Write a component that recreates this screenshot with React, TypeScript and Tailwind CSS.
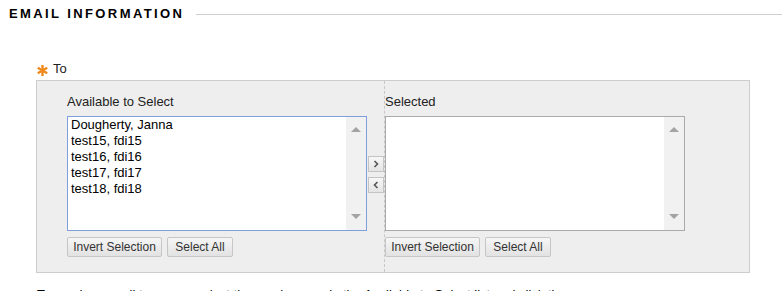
import React from "react";

const available = [
  "Dougherty, Janna",
  "test15, fdi15",
  "test16, fdi16",
  "test17, fdi17",
  "test18, fdi18",
];

const ScrollTrack = () => (
  <div className="flex w-[20px] flex-col items-center justify-between bg-[#f1f1f1] pt-[10px] pb-[11px]">
    <svg width="10" height="5" viewBox="0 0 10 5">
      <path d="M0 5 L5 0 L10 5 Z" fill="#a3a3a3" />
    </svg>
    <svg width="10" height="5" viewBox="0 0 10 5">
      <path d="M0 0 L10 0 L5 5 Z" fill="#a3a3a3" />
    </svg>
  </div>
);

const SmallButton = ({ label, w }: { label: string; w: string }) => (
  <button
    className={`h-[20px] ${w} rounded-[2px] border border-[#c6c6c6] bg-gradient-to-b from-[#f6f6f6] to-[#e2e2e2] text-[12px] leading-[18px] text-[#333]`}
  >
    {label}
  </button>
);

const ArrowButton = ({ dir }: { dir: "right" | "left" }) => (
  <div className="flex h-[16px] w-[16px] items-center justify-center border border-[#c4c4c4] bg-gradient-to-b from-[#f7f7f7] to-[#e4e4e4]">
    <svg width="6" height="8" viewBox="0 0 6 8">
      {dir === "right" ? (
        <path d="M1.5 1 L4.5 4 L1.5 7" stroke="#555" strokeWidth="1.6" fill="none" />
      ) : (
        <path d="M4.5 1 L1.5 4 L4.5 7" stroke="#555" strokeWidth="1.6" fill="none" />
      )}
    </svg>
  </div>
);

export default function App() {
  return (
    <div className="h-[291px] w-[782px] overflow-hidden bg-white font-['Liberation_Sans',Arial,sans-serif] text-[13px] text-[#222]">
      {/* section heading */}
      <div className="flex items-center pt-[6px] pl-[9px]">
        <h2 className="text-[13px] leading-[16px] font-bold tracking-[2.4px] text-black">
          EMAIL INFORMATION
        </h2>
        <div className="ml-[12px] h-px flex-1 bg-[#cfcfcf]" />
      </div>

      {/* To label */}
      <div className="mt-[39px] flex h-[16px] items-start pl-[37px] leading-[16px]">
        <svg width="11" height="11" viewBox="0 0 10 10" className="mt-[4px]">
          <g stroke="#f08a1c" strokeWidth="2.2" strokeLinecap="butt">
            <line x1="5" y1="0" x2="5" y2="10" />
            <line x1="0.7" y1="2.5" x2="9.3" y2="7.5" />
            <line x1="0.7" y1="7.5" x2="9.3" y2="2.5" />
          </g>
        </svg>
        <span className="ml-[5px] text-[#222]">To</span>
      </div>

      {/* picker box */}
      <div className="mt-[3px] ml-[36px] flex h-[193px] w-[714px] border border-[#cdcdcd] bg-[#eeeeee]">
        <div className="flex flex-col pt-[13px] pl-[30px]">
          <div className="leading-[16px]">Available to Select</div>
          <div className="mt-[6px] flex h-[115px] w-[300px] border border-[#7f9fdc] bg-white">
            <div className="flex-1 pl-[3px] text-black leading-[16px]">
              {available.map((a) => (
                <div key={a}>{a}</div>
              ))}
            </div>
            <ScrollTrack />
          </div>
          <div className="mt-[6px] flex gap-[5px]">
            <SmallButton label="Invert Selection" w="w-[95px]" />
            <SmallButton label="Select All" w="w-[66px]" />
          </div>
        </div>

        <div className="flex w-[17px] flex-col gap-[5px] pt-[75px] pl-[1px]">
          <ArrowButton dir="right" />
          <ArrowButton dir="left" />
        </div>

        <div className="flex flex-1 flex-col border-l border-dashed border-[#c8c8c8] pt-[13px]">
          <div className="leading-[16px]">Selected</div>
          <div className="mt-[6px] flex h-[115px] w-[300px] border border-[#aaaaaa] bg-white">
            <div className="flex-1" />
            <ScrollTrack />
          </div>
          <div className="mt-[6px] flex gap-[5px]">
            <SmallButton label="Invert Selection" w="w-[95px]" />
            <SmallButton label="Select All" w="w-[66px]" />
          </div>
        </div>
      </div>

      <p className="mt-[14px] pl-[37px] leading-[16px] text-black">
        To send an email to a user, select the user's name in the Available to Select list and click the arrow.
      </p>
    </div>
  );
}
